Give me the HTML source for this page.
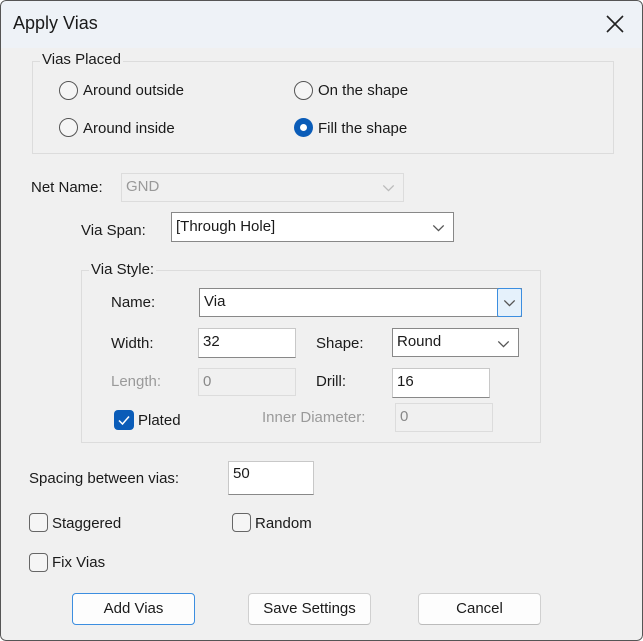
<!DOCTYPE html>
<html><head><style>
*{box-sizing:border-box;margin:0;padding:0}
body{width:643px;height:641px;background:#fff;font-family:"Liberation Sans",sans-serif;font-size:15px;color:#1a1a1a;overflow:hidden;position:relative}
.win{position:absolute;left:0;top:0;width:643px;height:641px;background:#f0f0f0;border-radius:6px;overflow:hidden}
.frame{position:absolute;left:0;top:0;width:643px;height:641px;border:1px solid #555;border-radius:6px;pointer-events:none}
.title{position:absolute;left:0;top:0;width:643px;height:48px;background:#eef2f7}
.a{position:absolute;white-space:nowrap}
.grp{position:absolute;border:1px solid #dcdcdc}
.leg{position:absolute;background:#f0f0f0;padding:0 2px;line-height:18px}
.rad{position:absolute;width:19px;height:19px;border:1.5px solid #555;border-radius:50%;background:#f5f5f5}
.rad.on{border:none;background:#0a5cb8}
.rad.on::after{content:"";position:absolute;left:6px;top:6px;width:7px;height:7px;border-radius:50%;background:#fff}
.box{position:absolute;background:#fff;border:1px solid #c8c8c8;border-bottom:1px solid #888;line-height:26px;padding-left:4px}
.dis{background:#f0f0f0;border:1px solid #dcdcdc;color:#999}
.chev{position:absolute;right:8px;top:8px}
.cb{position:absolute;width:19px;height:19px;border:1.5px solid #666;border-radius:4px;background:#f5f5f5}
.btn{position:absolute;height:32px;background:#fdfdfd;border:1px solid #d0d0d0;border-bottom-color:#bbb;border-radius:4px;text-align:center;line-height:30px}
.g{color:#9a9a9a}
</style></head><body><div class="win">
<div class="title"></div>
<div class="a" style="left:13px;top:13px;font-size:18px">Apply Vias</div>
<svg class="a" style="left:606px;top:15px" width="18" height="18"><path d="M1 1L17 17M17 1L1 17" stroke="#222" stroke-width="1.6"/></svg>

<div class="grp" style="left:32px;top:61px;width:582px;height:93px"></div>
<div class="leg" style="left:40px;top:51px">Vias Placed</div>
<div class="rad" style="left:59px;top:81px"></div><div class="a" style="left:83px;top:82px">Around outside</div>
<div class="rad" style="left:294px;top:81px"></div><div class="a" style="left:318px;top:82px">On the shape</div>
<div class="rad" style="left:59px;top:118px"></div><div class="a" style="left:83px;top:120px">Around inside</div>
<div class="rad on" style="left:294px;top:118px"></div><div class="a" style="left:318px;top:120px">Fill the shape</div>

<div class="a" style="left:31px;top:179px">Net Name:</div>
<div class="box dis" style="left:121px;top:173px;width:283px;height:29px;line-height:25px">GND<svg class="chev" style="top:10px" viewBox="0 0 10 6" width="13" height="8"><path d="M1 1L5 5L9 1" stroke="#bbb" fill="none"/></svg></div>
<div class="a" style="left:81px;top:222px">Via Span:</div>
<div class="box" style="left:171px;top:212px;width:283px;height:30px;border-color:#888;line-height:27px">[Through Hole]<svg class="chev" style="top:11px" viewBox="0 0 10 6" width="13" height="8"><path d="M1 1L5 5L9 1" stroke="#555" fill="none"/></svg></div>

<div class="grp" style="left:81px;top:270px;width:460px;height:173px"></div>
<div class="leg" style="left:89px;top:261px">Via Style:</div>
<div class="a" style="left:111px;top:294px">Name:</div>
<div class="box" style="left:199px;top:288px;width:323px;height:29px;border-color:#888;line-height:26px">Via</div>
<div class="a" style="left:497px;top:288px;width:25px;height:29px;background:#e5f1fb;border:1.5px solid #3c8ee0;border-radius:2px"><svg style="position:absolute;left:5px;top:10px" viewBox="0 0 10 6" width="13" height="8"><path d="M1 1L5 5L9 1" stroke="#555" fill="none"/></svg></div>
<div class="a" style="left:111px;top:335px">Width:</div>
<div class="box" style="left:198px;top:328px;width:98px;height:30px">32</div>
<div class="a" style="left:316px;top:335px">Shape:</div>
<div class="box" style="left:392px;top:328px;width:127px;height:29px;border-color:#888">Round<svg class="chev" style="top:11px" viewBox="0 0 10 6" width="13" height="8"><path d="M1 1L5 5L9 1" stroke="#555" fill="none"/></svg></div>
<div class="a g" style="left:111px;top:373px">Length:</div>
<div class="box dis" style="left:198px;top:368px;width:98px;height:28px;color:#888">0</div>
<div class="a" style="left:316px;top:373px">Drill:</div>
<div class="box" style="left:392px;top:368px;width:98px;height:30px">16</div>
<div class="a" style="left:114px;top:410px;width:20px;height:20px;background:#0a5cb8;border-radius:4px"><svg width="20" height="20"><path d="M5 10.5L8.5 14L15 6.5" stroke="#fff" stroke-width="1.5" fill="none"/></svg></div>
<div class="a" style="left:138px;top:412px">Plated</div>
<div class="a g" style="left:262px;top:409px">Inner Diameter:</div>
<div class="box dis" style="left:395px;top:403px;width:98px;height:29px;color:#888">0</div>

<div class="a" style="left:29px;top:470px">Spacing between vias:</div>
<div class="box" style="left:228px;top:461px;width:86px;height:34px;line-height:24px">50</div>
<div class="cb" style="left:29px;top:513px"></div><div class="a" style="left:52px;top:515px">Staggered</div>
<div class="cb" style="left:232px;top:513px"></div><div class="a" style="left:255px;top:515px">Random</div>
<div class="cb" style="left:29px;top:553px"></div><div class="a" style="left:52px;top:554px">Fix Vias</div>

<div class="btn" style="left:72px;top:593px;width:123px;border:1.5px solid #3c8ee0">Add Vias</div>
<div class="btn" style="left:248px;top:593px;width:123px">Save Settings</div>
<div class="btn" style="left:418px;top:593px;width:123px">Cancel</div>
<div class="frame"></div>
</div></body></html>
